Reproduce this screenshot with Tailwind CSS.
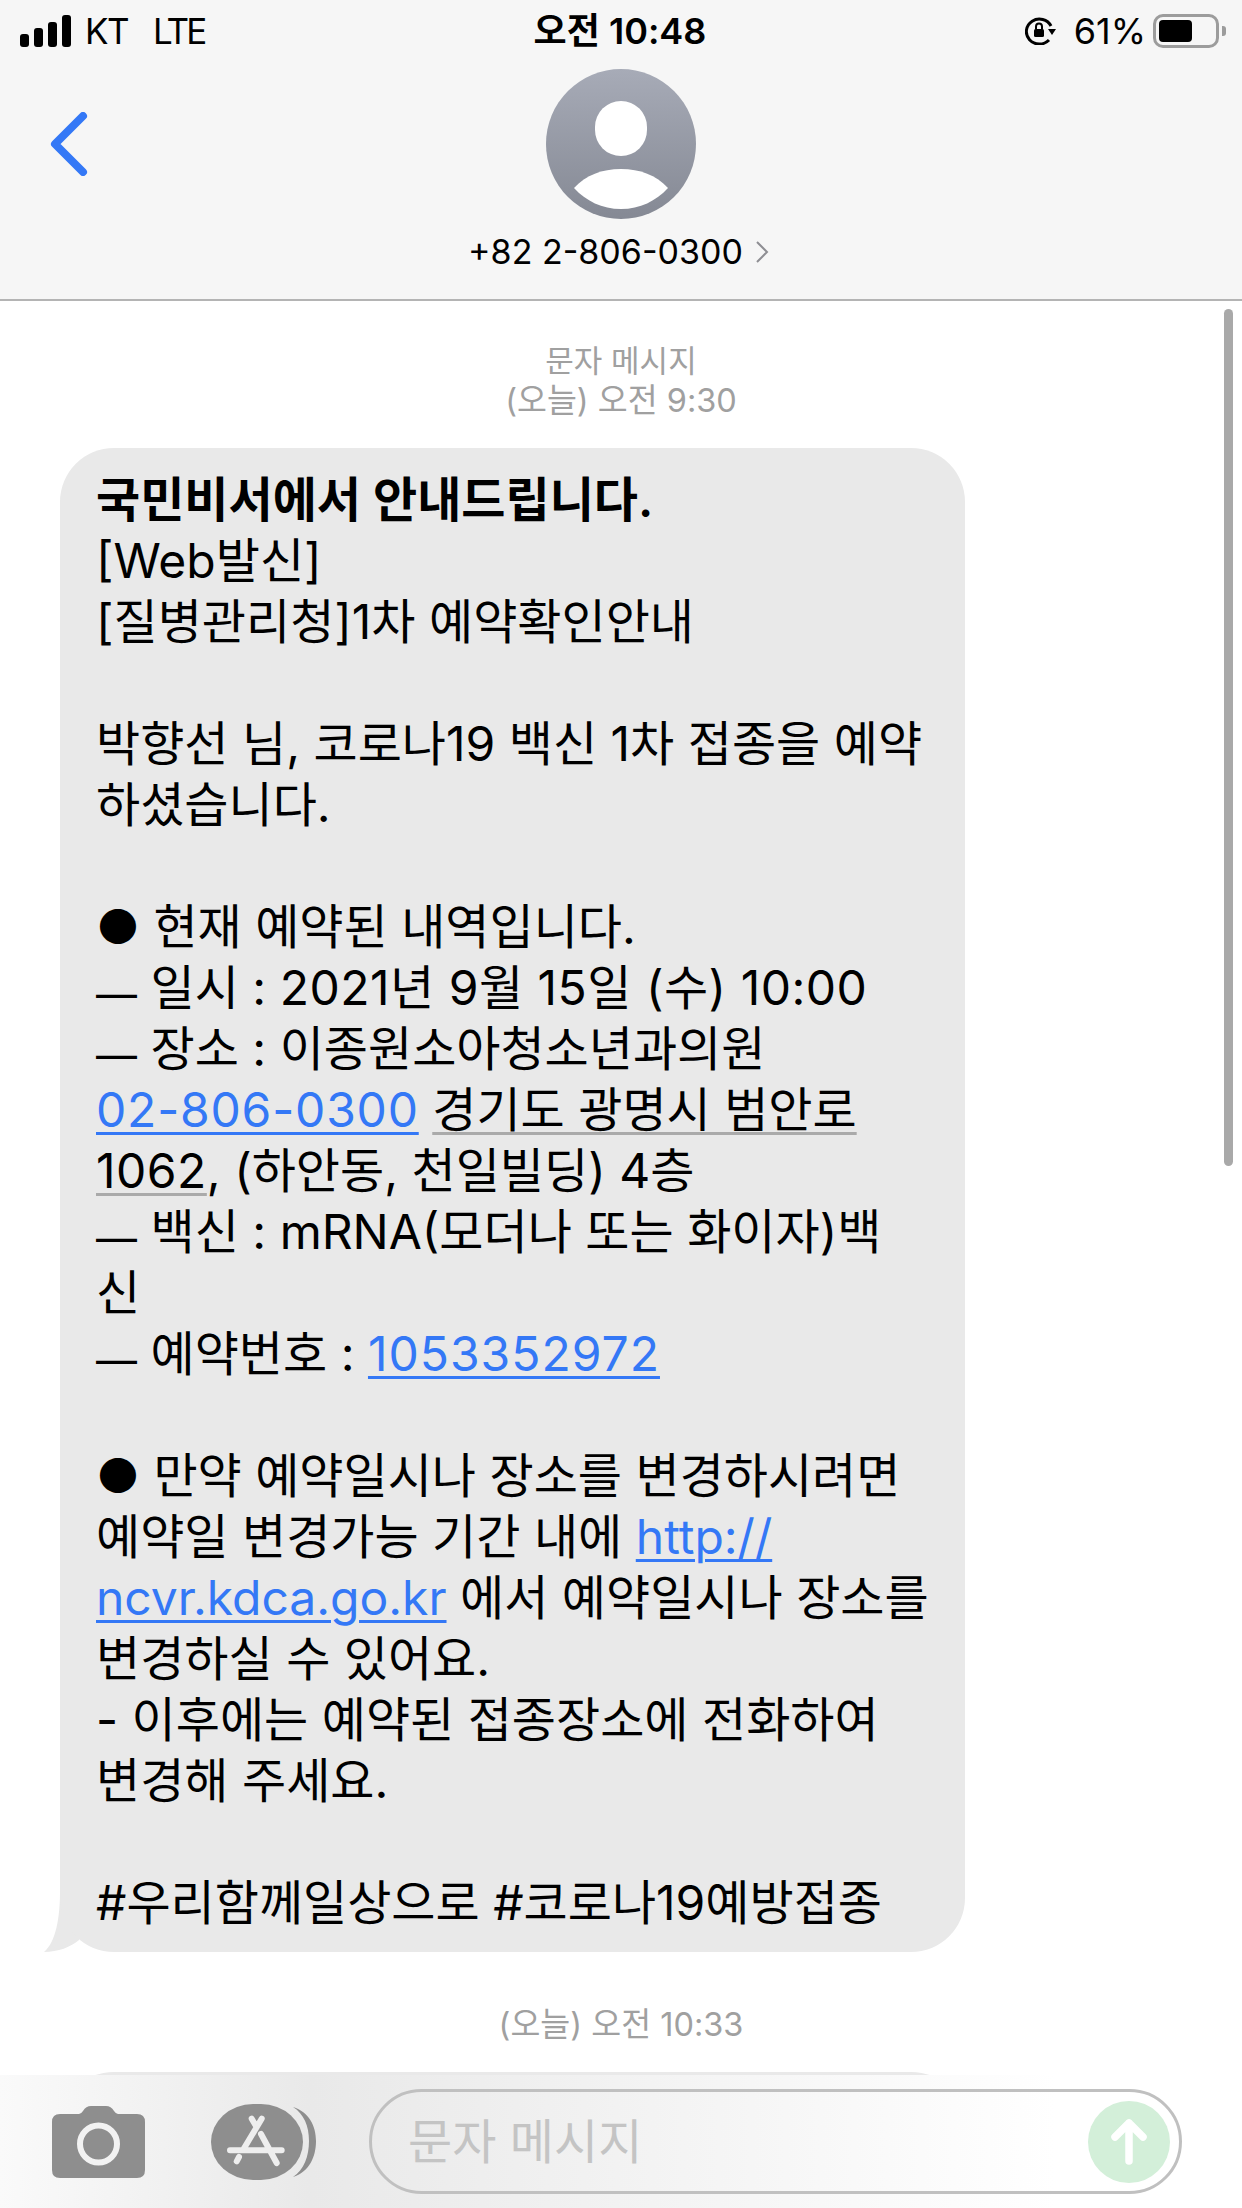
<!DOCTYPE html>
<html lang="ko">
  <head>
    <meta charset="UTF-8" />
    <title>Messages</title>
    <script src="https://cdn.jsdelivr.net/npm/@tailwindcss/browser@4"></script>
  </head>
  <body class="bg-white text-black font-['Inter','Noto_Sans_CJK_KR',sans-serif]">
    <div class="relative w-[1242px] h-[2208px] overflow-hidden bg-white">
      <!-- Header -->
      <header class="relative h-[301px] bg-[#f6f6f6] border-b-2 border-[#b4b4b4]">
        <div class="flex items-center justify-between h-[62px] pl-[20px] pr-[16px]">
          <div class="flex items-center w-[300px] text-[35px] leading-none">
            <div class="flex items-end gap-[5px] h-[32px] mr-[14px]">
              <span class="w-[9px] h-[13px] rounded-[3px] bg-black"></span>
              <span class="w-[9px] h-[19px] rounded-[3px] bg-black"></span>
              <span class="w-[9px] h-[25px] rounded-[3px] bg-black"></span>
              <span class="w-[9px] h-[32px] rounded-[3px] bg-black"></span>
            </div>
            <span class="tracking-[-1.500px]">KT</span>
            <span class="ml-[25px] tracking-[-3px]">LTE</span>
          </div>
          <div class="text-[36px] leading-none font-semibold mr-[6px]">오전 10:48</div>
          <div class="flex items-center justify-end w-[300px] text-[36px] leading-none">
            <svg class="w-[32px] h-[28px] mr-[17px]" viewBox="0 0 32 28">
              <path d="M26 9A13 12.500 0 1 0 24 23" fill="none" stroke="#000" stroke-width="3"/>
              <path d="M23 12h8l-4 6z" fill="#000"/>
              <rect x="9" y="12" width="10" height="8" rx="1.500" fill="#000"/>
              <path d="M11 12V9.500a3 3 0 0 1 6 0V12" fill="none" stroke="#000" stroke-width="2"/>
            </svg>
            <span>61%</span>
            <div class="relative ml-[7px] mr-[7px] w-[66px] h-[34px] border-[3px] border-[#9c9c9c] rounded-[10px] p-[3px]">
              <div class="w-[33px] h-full rounded-[4px] bg-black"></div>
              <span class="absolute right-[-10px] top-[9px] w-[4px] h-[10px] rounded-r-[3px] bg-[#9c9c9c]"></span>
            </div>
          </div>
        </div>
        <svg class="absolute left-[47px] top-[112px] w-[42px] h-[64px]" viewBox="0 0 42 64">
          <path d="M36 4 8 32l28 28" fill="none" stroke="#3478f6" stroke-width="8" stroke-linecap="round" stroke-linejoin="round"/>
        </svg>
        <div class="flex flex-col items-center">
          <div class="relative mt-[7px] w-[150px] h-[150px] rounded-full overflow-hidden bg-gradient-to-b from-[#a7abb7] to-[#858994]">
            <span class="absolute left-[49px] top-[32px] w-[52px] h-[55px] rounded-full bg-white"></span>
            <svg class="absolute left-[28px] top-[100px] w-[94px] h-[40px]" viewBox="0 0 94 40">
              <path d="M0 19C12 6 28 0 47 0s35 6 47 19C82 32 66 40 47 40S12 32 0 19z" fill="#fff"/>
            </svg>
          </div>
          <div class="flex items-center mt-[13px] mr-[5px] text-[34px] leading-[40px]">
            <span>+82 2-806-0300</span>
            <svg class="ml-[12px] w-[14px] h-[24px]" viewBox="0 0 14 24">
              <path d="M2 2l10 10L2 22" fill="none" stroke="#8e8e93" stroke-width="2"/>
            </svg>
          </div>
        </div>
      </header>

      <!-- Scroll indicator -->
      <div class="absolute left-[1224px] top-[309px] w-[9px] h-[857px] rounded-full bg-[#a9a9a9]"></div>

      <!-- Messages -->
      <main class="pl-[60px]">
        <div class="pr-[60px] pt-[40px] text-center leading-[40px] text-[#a0a0a0]">
          <div class="text-[31px]">문자 메시지</div>
          <div class="text-[32.500px]">(오늘) 오전 9:30</div>
        </div>

        <div class="relative w-[905px] mt-[27px]">
          <svg class="absolute left-[-16px] bottom-0 w-[40px] h-[60px]" viewBox="0 0 40 60">
            <path d="M16 0C16 25 12 50 0 60 14 60 27 55 35 48L40 0z" fill="#e9e9e9"/>
          </svg>
          <div class="relative rounded-[54px] bg-[#e9e9e9] pl-[36px] pr-[20px] pt-[21px] pb-[19px] text-[48px] leading-[61px] whitespace-nowrap">
            <div class="font-semibold">국민비서에서 안내드립니다.</div>
            <div>[Web발신]</div>
            <div>[질병관리청]1차 예약확인안내</div>
            <div>&nbsp;</div>
            <div>박향선 님, 코로나19 백신 1차 접종을 예약</div>
            <div>하셨습니다.</div>
            <div>&nbsp;</div>
            <div>● 현재 예약된 내역입니다.</div>
            <div><span class="relative top-[4px] text-[41px] leading-none">—</span> 일시 : <span class="tracking-[0.500px]">2021년 9월 15일 (수) 10:00</span></div>
            <div><span class="relative top-[4px] text-[41px] leading-none">—</span> 장소 : 이종원소아청소년과의원</div>
            <div><a class="text-[#3478f6] tracking-[0.800px] underline decoration-[3px] underline-offset-[5px]">02-806-0300</a> <a class="underline decoration-[#aaaaaa] decoration-[3px] underline-offset-[5px]">경기도 광명시 범안로</a></div>
            <div><a class="tracking-[0.500px] underline decoration-[#aaaaaa] decoration-[3px] underline-offset-[5px]">1062</a>, (하안동, 천일빌딩) 4층</div>
            <div><span class="relative top-[4px] text-[41px] leading-none">—</span> 백신 : mRNA(모더나 또는 화이자)백</div>
            <div>신</div>
            <div><span class="relative top-[4px] text-[41px] leading-none">—</span> 예약번호 : <a class="text-[#3478f6] tracking-[1px] underline decoration-[3px] underline-offset-[5px]">1053352972</a></div>
            <div>&nbsp;</div>
            <div>● 만약 예약일시나 장소를 변경하시려면</div>
            <div>예약일 변경가능 기간 내에 <a class="text-[#3478f6] underline decoration-[3px] underline-offset-[5px]">http://</a></div>
            <div><a class="text-[#3478f6] underline decoration-[3px] underline-offset-[5px]">ncvr.kdca.go.kr</a> 에서 예약일시나 장소를</div>
            <div>변경하실 수 있어요.</div>
            <div>- 이후에는 예약된 접종장소에 전화하여</div>
            <div>변경해 주세요.</div>
            <div>&nbsp;</div>
            <div>#우리함께일상으로 #코로나19예방접종</div>
          </div>
        </div>

        <div class="pr-[60px] mt-[53px] text-center text-[32.500px] leading-[40px] text-[#a0a0a0]">(오늘) 오전 10:33</div>

        <div class="w-[905px] h-[300px] mt-[27px] rounded-[54px] bg-[#e9e9e9]"></div>
      </main>

      <!-- Input bar -->
      <footer class="absolute left-0 right-0 bottom-0 h-[133px] flex items-center pl-[52px] bg-gradient-to-r from-[#fafafa] from-0% via-[#e9e9e9] via-25% to-white to-85%">
        <svg class="w-[93px] h-[72px] shrink-0" viewBox="0 0 93 72">
          <path d="M8 8h19q2 0 4-3 3-5 8-5h15q5 0 8 5 2 3 4 3h19q8 0 8 8v48q0 8-8 8H8q-8 0-8-8V16q0-8 8-8z" fill="#8e8e8e"/>
          <circle cx="46.500" cy="38" r="18.500" fill="none" stroke="#f2f2f2" stroke-width="6"/>
        </svg>
        <svg class="ml-[66px] w-[106px] h-[76px] shrink-0" viewBox="0 0 106 76">
          <path d="M82 3C98 8 105 22 105 37 105 53 98 68 82 73 93 66 98 52 98 37 98 22 93 10 82 3z" fill="#8e8e8e"/>
          <rect x="0" y="0" width="92" height="76" rx="42" ry="38" fill="#8e8e8e"/>
          <path d="M50.700 14.700 32 46M25.700 57.300 28 53M40.700 14.700 45 22M50 30 65.700 59M19 46.300H70.700" fill="none" stroke="#eeeeee" stroke-width="6" stroke-linecap="round"/>
        </svg>
        <div class="relative ml-[52px] flex items-center w-[813px] h-[105px] rounded-full border-[3px] border-[#c0c0c0] pl-[36px] text-[48px] text-[#c4c4c4]">
          문자 메시지
          <span class="absolute right-[9px] top-[9px] flex items-center justify-center w-[82px] h-[82px] rounded-full bg-[#d3efd9]">
            <svg class="w-[36px] h-[46px]" viewBox="0 0 36 46">
              <path d="M18 42V4M4 18 18 4l14 14" fill="none" stroke="#fff" stroke-width="7.500" stroke-linecap="round" stroke-linejoin="round"/>
            </svg>
          </span>
        </div>
      </footer>
    </div>
  </body>
</html>
